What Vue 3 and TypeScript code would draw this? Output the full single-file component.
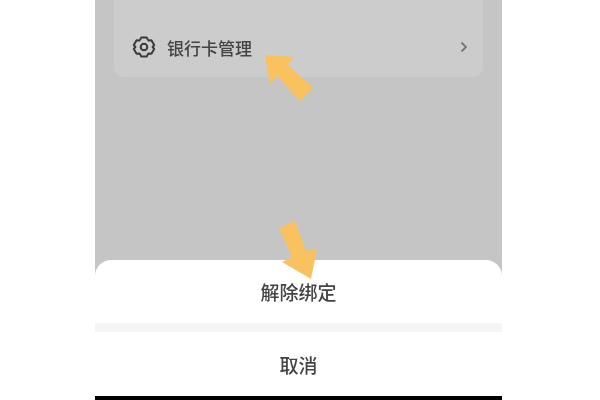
<script setup lang="ts">
const title: string = "银行卡管理";
</script>

<template>
  <div class="page">
    <div class="phone">
      <div class="backdrop">
        <div class="card">
          <div class="row">
            <svg class="gear" viewBox="0 0 24 24" fill="none" stroke="#3a3a3a" stroke-width="2" stroke-linejoin="round">
              <path d="M9.2 2.6h5.6l1.5 2.8 3.1-.1 2.8 4.8-1.6 1.9 1.6 1.9-2.8 4.8-3.1-.1-1.5 2.8H9.2l-1.5-2.8-3.1.1-2.8-4.8L3.4 12l-1.6-1.9 2.8-4.8 3.1.1z" />
              <circle cx="12" cy="12" r="3.3" />
            </svg>
            <span class="label">{{ title }}</span>
            <svg class="chev" viewBox="0 0 8 12" fill="none" stroke="#777" stroke-width="1.8">
              <path d="M1.5 1.5 6 6l-4.5 4.5" />
            </svg>
          </div>
        </div>
      </div>
      <div class="sheet">
        <div class="action first">解除绑定</div>
        <div class="divider"></div>
        <div class="action last">取消</div>
      </div>
      <div class="homebar"></div>
    </div>
    <svg class="arrows" viewBox="0 0 600 400">
      <path d="M265 55 294 57 288 65 313 88 300 101 277 76 270 84Z" fill="#f9c25f" />
      <path d="M279 228 295 221 306 251 317 249 311 279 282 262 292 257Z" fill="#f9c25f" />
    </svg>
  </div>
</template>

<style scoped>
.page {
  position: relative;
  width: 600px;
  height: 400px;
  overflow: hidden;
  background: #fff;
  font-family: "Noto Sans CJK SC", "Liberation Sans", sans-serif;
}
.phone {
  display: flex;
  flex-direction: column;
  width: 407px;
  height: 400px;
  margin-left: 95px;
  background: #c5c5c5;
}
.backdrop {
  height: 260px;
  padding: 0 19px;
}
.card {
  height: 77px;
  border-radius: 0 0 10px 10px;
  background: #cccccc;
}
.row {
  display: flex;
  align-items: center;
  height: 94px;
  padding: 0 15px 0 18px;
  box-sizing: border-box;
}
.gear {
  width: 24px;
  height: 24px;
  margin-right: 11px;
  filter: blur(0.3px);
}
.label {
  flex: 1;
  font-size: 17px;
  font-weight: 500;
  color: #444;
  filter: blur(0.4px);
}
.chev {
  width: 8px;
  height: 12px;
  filter: blur(0.3px);
}
.sheet {
  display: flex;
  flex-direction: column;
  flex: 1;
  border-radius: 16px 16px 0 0;
  background: #fff;
}
.action {
  display: flex;
  align-items: center;
  justify-content: center;
  font-size: 19px;
  font-weight: 500;
  color: #444;
  filter: blur(0.4px);
}
.first {
  height: 63px;
}
.divider {
  height: 9px;
  background: #f5f5f5;
}
.last {
  flex: 1;
}
.homebar {
  height: 4px;
  background: #000;
}
.arrows {
  position: absolute;
  left: 0;
  top: 0;
  width: 600px;
  height: 400px;
  filter: blur(0.4px);
}
</style>

<style>
html,
body {
  margin: 0;
  background: #fff;
}
</style>
